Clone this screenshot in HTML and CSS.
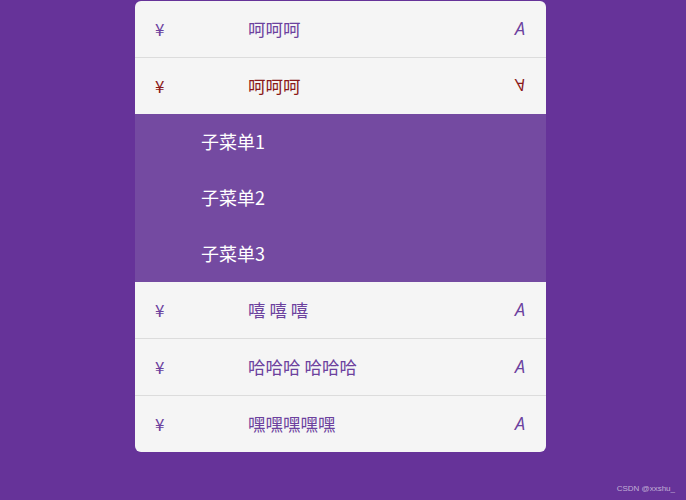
FILE: index.html
```html
<!DOCTYPE html>
<html lang="zh">
<head>
<meta charset="utf-8">
<link rel="stylesheet" href="styles.css">
</head>
<body>
<ul class="menu">
  <li class="item">
    <div class="row"><span class="icon">¥</span><span class="label">呵呵呵</span><span class="arrow">A</span></div>
  </li>
  <li class="item open">
    <div class="row"><span class="icon">¥</span><span class="label">呵呵呵</span><span class="arrow">A</span></div>
    <ul class="sub">
      <li class="sub-item">子菜单1</li>
      <li class="sub-item">子菜单2</li>
      <li class="sub-item">子菜单3</li>
    </ul>
  </li>
  <li class="item">
    <div class="row"><span class="icon">¥</span><span class="label">嘻 嘻 嘻</span><span class="arrow">A</span></div>
  </li>
  <li class="item">
    <div class="row"><span class="icon">¥</span><span class="label">哈哈哈 哈哈哈</span><span class="arrow">A</span></div>
  </li>
  <li class="item last">
    <div class="row"><span class="icon">¥</span><span class="label">嘿嘿嘿嘿嘿</span><span class="arrow">A</span></div>
  </li>
</ul>
<div class="watermark">CSDN @xxshu_</div>
</body>
</html>
```
FILE: styles.css
```css
* { box-sizing: border-box; }
html, body {
  margin: 0;
  padding: 0;
  height: 100%;
}
body {
  background: #663399;
  font-family: "Noto Sans CJK SC", "Noto Sans", sans-serif;
  position: relative;
  padding-top: 1px;
}
.menu {
  list-style: none;
  margin: 0 0 0 135px;
  padding: 0;
  width: 411px;
  background: #f5f5f5;
  border-radius: 6px;
  overflow: hidden;
}
.item {
  border-bottom: 1px solid #dcdcdc;
}
.item.open, .item.last {
  border-bottom: none;
}
.row {
  height: 56px;
  display: flex;
  align-items: center;
  padding: 0 20px 2px;
  color: #6c419e;
  font-size: 18px;
}
.icon {
  width: 93px;
  font-size: 17px;
}
.label {
  flex: 1;
  font-size: 17.5px;
}
.arrow {
  font-family: "Open Sans", "Noto Sans", sans-serif;
  font-style: italic;
  font-size: 18px;
  padding-right: 1px;
}
.open .row {
  color: #8a1818;
}
.open .arrow {
  transform: scaleY(-1);
  font-size: 17px;
}
.sub {
  list-style: none;
  margin: 0;
  padding: 0;
  background: #744aa1;
}
.sub-item {
  height: 56px;
  display: flex;
  align-items: center;
  padding: 0 0 2px 66px;
  color: #ffffff;
  font-size: 18px;
}
.watermark {
  position: absolute;
  right: 11px;
  top: 484px;
  font-family: "Liberation Sans", sans-serif;
  font-size: 8px;
  color: rgba(255, 255, 255, 0.6);
}
```
